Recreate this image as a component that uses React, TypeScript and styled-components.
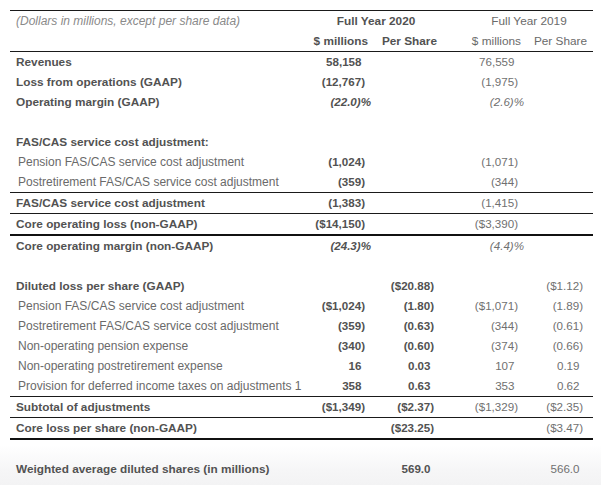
import React from "react";
import styled, { createGlobalStyle } from "styled-components";

const Global = createGlobalStyle`
  html, body { margin: 0; padding: 0; background: #ffffff; }
  body { font-family: "Liberation Sans", Arial, sans-serif; }
`;

const Page = styled.div`
  width: 601px;
  height: 485px;
  padding: 10px 8px 0 10px;
  box-sizing: border-box;
  background: linear-gradient(to bottom, #ffffff 0px, #ffffff 445px, #f6f6f7 470px, #f3f3f4 485px);
`;

const Table = styled.table`
  width: 583px;
  border-collapse: separate;
  border-spacing: 0;
  table-layout: fixed;
  border-top: 1px solid #1a1a1a;
  color: #555;
`;

type Line = "none" | "thin" | "thick";

const lineCss = (l?: Line) =>
  l === "thick" ? "2px solid #111" : l === "thin" ? "1px solid #1a1a1a" : "none";

const Label = styled.td<{ $bold?: boolean; $italic?: boolean; $sub?: boolean; $line?: Line; $h?: number }>`
  box-sizing: content-box;
  height: ${(p) => p.$h ?? 20}px;
  border-top: ${(p) => lineCss(p.$line)};
  padding: 0 0 0 ${(p) => (p.$sub ? 8 : 6)}px;
  font-size: ${(p) => (p.$bold ? "11.8px" : "12px")};
  font-weight: ${(p) => (p.$bold ? 700 : 400)};
  font-style: ${(p) => (p.$italic ? "italic" : "normal")};
  color: ${(p) => (p.$italic ? "#8a8a8a" : p.$bold ? "#525252" : "#6a6a6a")};
  white-space: nowrap;
  vertical-align: middle;
  line-height: 14px;
`;

const Num = styled.td<{ $bold?: boolean; $pr?: number; $line?: Line; $h?: number }>`
  box-sizing: content-box;
  height: ${(p) => p.$h ?? 20}px;
  border-top: ${(p) => lineCss(p.$line)};
  padding: 0 ${(p) => p.$pr ?? 3}px 0 0;
  text-align: right;
  font-size: 11.6px;
  font-weight: ${(p) => (p.$bold ? 700 : 400)};
  color: ${(p) => (p.$bold ? "#525252" : "#707070")};
  white-space: nowrap;
  vertical-align: middle;
  line-height: 14px;
`;

const YearHead = styled.th<{ $bold?: boolean; $pl: number; $pr: number }>`
  height: 20px;
  padding: 0 ${(p) => p.$pr}px 0 ${(p) => p.$pl}px;
  text-align: center;
  font-size: 11.8px;
  font-weight: ${(p) => (p.$bold ? 700 : 400)};
  color: ${(p) => (p.$bold ? "#525252" : "#6a6a6a")};
  vertical-align: middle;
  white-space: nowrap;
`;

const SubHead = styled.th<{ $bold?: boolean; $pr?: number }>`
  height: 20px;
  border-bottom: 1px solid #1a1a1a;
  padding: 0 ${(p) => p.$pr ?? 0}px 0 0;
  text-align: right;
  font-size: 11.8px;
  font-weight: ${(p) => (p.$bold ? 700 : 400)};
  color: ${(p) => (p.$bold ? "#525252" : "#6a6a6a")};
  vertical-align: middle;
  white-space: nowrap;
`;

const HeadBlank = styled.th`
  height: 20px;
  border-bottom: 1px solid #1a1a1a;
  padding: 0;
`;

const Pct = styled.span`
  font-style: italic;
  display: inline-block;
  margin-right: -6px;
`;

const Pad = styled.span`
  padding-right: 3.5px;
`;

type RowDef = {
  label?: string;
  bold?: boolean;
  sub?: boolean;
  line?: Line;
  h?: number;
  v?: [string, string, string, string];
};

const rows: RowDef[] = [
  { label: "Revenues", bold: true, v: ["58,158", "", "76,559", ""] },
  { label: "Loss from operations (GAAP)", bold: true, v: ["(12,767)", "", "(1,975)", ""] },
  { label: "Operating margin (GAAP)", bold: true, v: ["(22.0)%", "", "(2.6)%", ""] },
  { h: 20 },
  { label: "FAS/CAS service cost adjustment:", bold: true },
  { label: "Pension FAS/CAS service cost adjustment", sub: true, v: ["(1,024)", "", "(1,071)", ""] },
  { label: "Postretirement FAS/CAS service cost adjustment", sub: true, v: ["(359)", "", "(344)", ""] },
  { label: "FAS/CAS service cost adjustment", bold: true, line: "thin", v: ["(1,383)", "", "(1,415)", ""] },
  { label: "Core operating loss (non-GAAP)", bold: true, line: "thin", v: ["($14,150)", "", "($3,390)", ""] },
  { label: "Core operating margin (non-GAAP)", bold: true, line: "thick", v: ["(24.3)%", "", "(4.4)%", ""] },
  { h: 20 },
  { label: "Diluted loss per share (GAAP)", bold: true, v: ["", "($20.88)", "", "($1.12)"] },
  { label: "Pension FAS/CAS service cost adjustment", sub: true, v: ["($1,024)", "(1.80)", "($1,071)", "(1.89)"] },
  { label: "Postretirement FAS/CAS service cost adjustment", sub: true, v: ["(359)", "(0.63)", "(344)", "(0.61)"] },
  { label: "Non-operating pension expense", sub: true, v: ["(340)", "(0.60)", "(374)", "(0.66)"] },
  { label: "Non-operating postretirement expense", sub: true, v: ["16", "0.03", "107", "0.19"] },
  { label: "Provision for deferred income taxes on adjustments 1", sub: true, v: ["358", "0.63", "353", "0.62"] },
  { label: "Subtotal of adjustments", bold: true, line: "thin", v: ["($1,349)", "($2.37)", "($1,329)", "($2.35)"] },
  { label: "Core loss per share (non-GAAP)", bold: true, line: "thin", v: ["", "($23.25)", "", "($3.47)"] },
  { line: "thick", h: 19 },
  { label: "Weighted average diluted shares (in millions)", bold: true, v: ["", "569.0", "", "566.0"] },
];

const renderValue = (s: string) => {
  if (!s) return null;
  if (s.endsWith("%")) return <Pct>{s}</Pct>;
  if (s.endsWith(")")) return s;
  return <Pad>{s}</Pad>;
};

const colPr = [3, 3, 3, 10];

export default function App() {
  return (
    <>
      <Global />
      <Page>
        <Table>
          <colgroup>
            <col style={{ width: 295 }} />
            <col style={{ width: 63 }} />
            <col style={{ width: 69 }} />
            <col style={{ width: 84 }} />
            <col style={{ width: 72 }} />
          </colgroup>
          <thead>
            <tr>
              <Label $italic>(Dollars in millions, except per share data)</Label>
              <YearHead colSpan={2} $bold $pl={10} $pr={0}>
                Full Year 2020
              </YearHead>
              <YearHead colSpan={2} $pl={28} $pr={0}>
                Full Year 2019
              </YearHead>
            </tr>
            <tr>
              <HeadBlank />
              <SubHead $bold>$ millions</SubHead>
              <SubHead $bold>Per Share</SubHead>
              <SubHead>$ millions</SubHead>
              <SubHead $pr={6}>Per Share</SubHead>
            </tr>
          </thead>
          <tbody>
            {rows.map((r, i) => (
              <tr key={i}>
                <Label $bold={r.bold} $sub={r.sub} $line={r.line} $h={r.h}>
                  {r.label ?? ""}
                </Label>
                {(r.v ?? ["", "", "", ""]).map((v, j) => (
                  <Num key={j} $bold={j < 2} $pr={colPr[j]} $line={r.line} $h={r.h}>
                    {renderValue(v)}
                  </Num>
                ))}
              </tr>
            ))}
          </tbody>
        </Table>
      </Page>
    </>
  );
}
